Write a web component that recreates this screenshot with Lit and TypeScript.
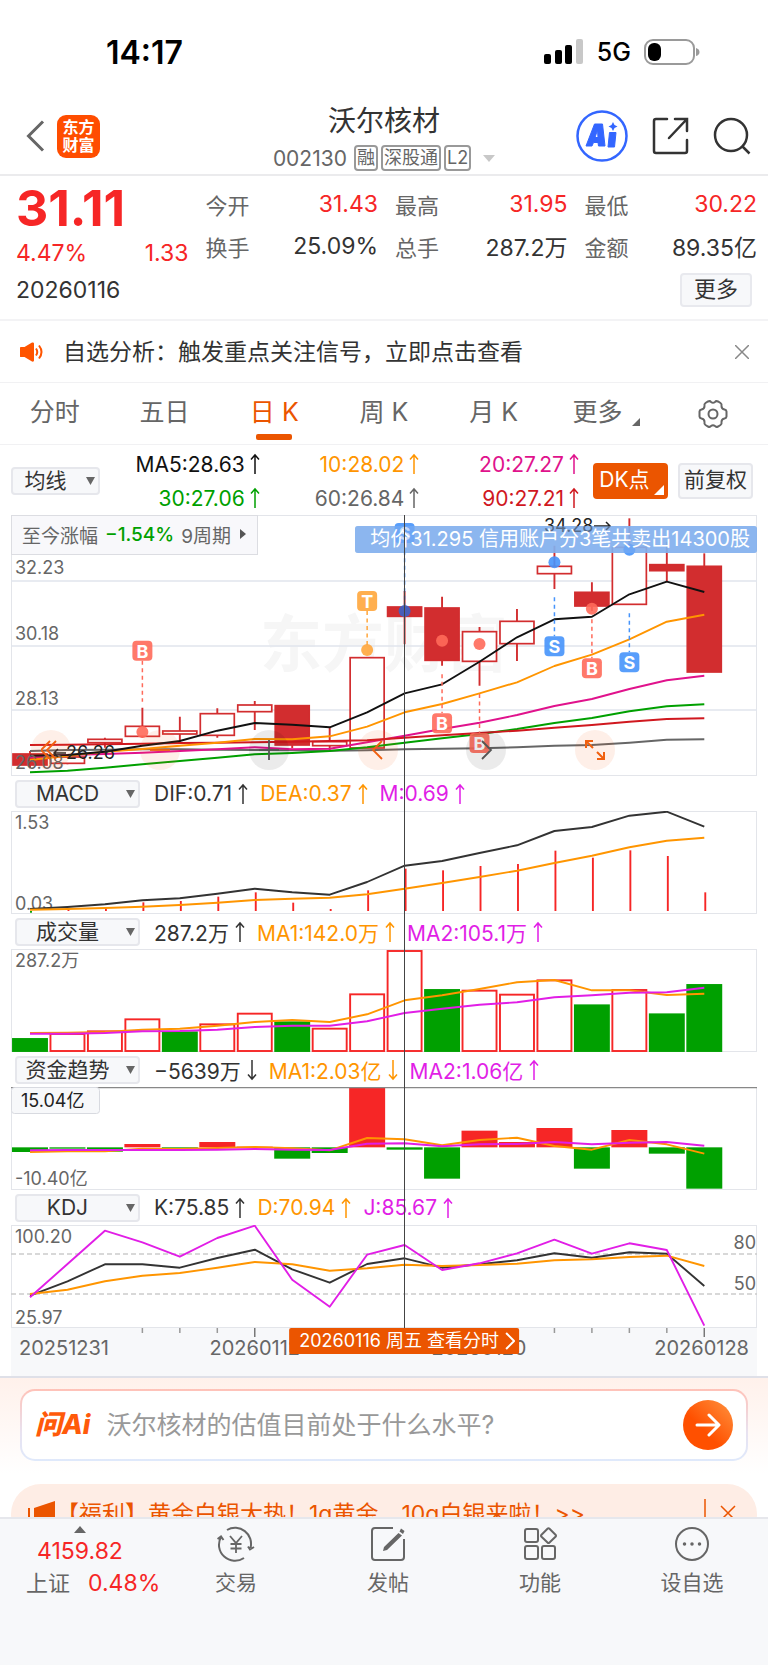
import { LitElement, html, svg, css } from "lit";
import { customElement, state } from "lit/decorators.js";
import { classMap } from "lit/directives/class-map.js";

/* Series samples are stored in thirds of a pixel; each pane subtracts its own origin. */
const PITCH = 37.46;
const cx = (i: number) => 19 + PITCH * i;
const yOf = (v: number, top: number) => (v - top) / 3;
const path = (values: number[], top: number) =>
  values.map((v, i) => `${i ? "L" : "M"}${cx(i).toFixed(1)} ${yOf(v, top).toFixed(1)}`).join("");

const RED = "#d22d2f";
const UP = "#f62626";
const GREEN = "#00a000";
const ORANGE = "#ff9500";
const VIOLET = "#e11ee6";
const INK = "#333";

const CANDLES: Array<[number, number, number, number, number]> = [
  // filled, body top, body bottom, wick top, wick bottom
  [1, 747, 780, 738, 790],
  [0, 756, 775, 750, 778],
  [0, 703, 713, 698, 728],
  [0, 664, 694, 608, 698],
  [0, 678, 687, 635, 710],
  [0, 626, 691, 610, 698],
  [0, 600, 620, 588, 675],
  [1, 602, 720, 600, 730],
  [0, 710, 722, 667, 740],
  [0, 458, 729, 458, 729],
  [1, 306, 334, 258, 418],
  [1, 309, 466, 275, 482],
  [0, 380, 469, 366, 542],
  [0, 349, 416, 312, 468],
  [0, 184, 206, 122, 252],
  [1, 262, 303, 232, 318],
  [0, 127, 298, 40, 298],
  [1, 179, 197, 110, 230],
  [1, 184, 501, 145, 501],
];

const AVERAGES: Array<[string, number[]]> = [
  ["#666", [738, 735, 734, 733, 733, 734, 735, 736, 737, 736, 733, 731, 730, 727, 722, 720, 713, 704, 703]],
  ["#00a000", [802, 797, 788, 778, 768, 758, 748, 744, 738, 727, 713, 700, 687, 672, 654, 639, 619, 604, 598]],
  ["#e0128c", [757, 750, 747, 743, 738, 733, 727, 733, 731, 712, 692, 672, 653, 630, 603, 582, 552, 526, 512]],
  ["#d0181f", [720, 719, 718, 716, 714, 713, 712, 710, 708, 706, 698, 691, 684, 677, 668, 660, 650, 642, 640]],
  [ORANGE, [765, 752, 740, 732, 722, 713, 702, 703, 694, 665, 622, 597, 565, 532, 483, 449, 403, 350, 329]],
  ["#111", [752, 750, 740, 722, 708, 677, 654, 659, 667, 622, 565, 538, 470, 397, 343, 335, 268, 230, 261]],
];

const TRADES: Array<{ at: number; kind: string; tag: number; from: number; to: number; dot: number }> = [
  { at: 3, kind: "B", tag: 437, from: 467, to: 590, dot: 681 },
  { at: 9, kind: "T", tag: 288, from: 318, to: 420, dot: 435 },
  { at: 10, kind: "S", tag: 84, from: 115, to: 300, dot: 318 },
  { at: 11, kind: "B", tag: 655, from: 508, to: 624, dot: 407 },
  { at: 12, kind: "B", tag: 714, from: 567, to: 684, dot: 417 },
  { at: 14, kind: "S", tag: 424, from: 277, to: 394, dot: 172 },
  { at: 15, kind: "B", tag: 490, from: 343, to: 460, dot: 311 },
  { at: 16, kind: "S", tag: 472, from: 325, to: 442, dot: 134 },
];
const TRADE_COLORS: Record<string, string> = { B: "#ff6a5a", S: "#4694fb", T: "#ffa63c" };

const MACD = {
  dif: [402, 396, 388, 376, 370, 356, 341, 352, 359, 321, 272, 258, 234, 211, 168, 156, 122, 110, 155],
  dea: [404, 402, 399, 395, 390, 383, 375, 371, 368, 358, 341, 324, 306, 287, 264, 242, 217, 197, 188],
  bars: [413, 402, 400, 382, 378, 365, 352, 383, 402, 346, 281, 286, 273, 267, 227, 248, 226, 243, 352],
};

const VOLUME = {
  bars: [-788, 773, 765, 729, -768, 744, 712, -738, 757, 654, 524, -641, 643, 655, 612, -687, 641, -714, -626],
  ma1: [773, 772, 770, 763, 760, 751, 740, 734, 740, 717, 675, 660, 641, 621, 614, 645, 645, 659, 655],
  ma2: [775, 775, 773, 768, 767, 763, 755, 751, 751, 738, 713, 700, 688, 681, 666, 660, 652, 651, 637],
};

const FUNDS = {
  bars: [306, 296, 305, 282, 296, 276, 290, 326, 309, 113, 299, 386, 242, 276, 234, 356, 240, 311, 416],
  ma1: [306, 304, 304, 296, 297, 294, 291, 295, 301, 264, 268, 286, 270, 263, 288, 299, 270, 283, 311],
  ma2: [301, 300, 300, 300, 300, 299, 297, 299, 300, 281, 280, 289, 283, 282, 276, 283, 278, 276, 287],
};

const KDJ = {
  k: [735, 692, 641, 641, 651, 622, 597, 656, 696, 640, 623, 651, 641, 629, 608, 621, 605, 609, 706],
  d: [730, 717, 692, 675, 667, 651, 634, 641, 660, 653, 642, 646, 643, 639, 629, 626, 619, 615, 646],
  j: [740, 640, 540, 575, 618, 562, 525, 687, 768, 612, 583, 658, 638, 608, 567, 609, 578, 598, 825],
};

const FONT = css`
  :host {
    font-family: Inter, "Noto Sans CJK SC", sans-serif;
  }
  * {
    box-sizing: border-box;
  }
  button,
  select,
  input {
    font: inherit;
    color: inherit;
    margin: 0;
    padding: 0;
    border: 0;
    background: none;
  }
  svg {
    display: block;
    flex: none;
  }
`;

const arrow = (down = false) => html`
  <svg class="arrow" width="10" height="22" viewBox="0 0 10 22" fill="none" stroke="currentColor" stroke-width="1.500">
    <path d=${down ? "M5 1V20M1 15.500L5 20L9 15.500" : "M5 21V2M1 6.500L5 2L9 6.500"} />
  </svg>
`;

@customElement("status-bar")
class StatusBar extends LitElement {
  static styles = [
    FONT,
    css`
      :host {
        display: flex;
        align-items: center;
        justify-content: space-between;
        height: 100px;
        padding: 4px 68px 0 106px;
        color: #000;
      }
      .time {
        font-size: 32px;
        font-weight: 600;
      }
      .right {
        display: flex;
        align-items: center;
        gap: 13px;
        font-size: 25px;
        font-weight: 500;
      }
    `,
  ];
  render() {
    return html`
      <span class="time">14:17</span>
      <div class="right">
        <svg width="40" height="26" viewBox="0 0 40 26">
          <rect x="0" y="15" width="7" height="10" rx="2" />
          <rect x="11" y="11" width="7" height="14" rx="2" />
          <rect x="21" y="6" width="7" height="19" rx="2" />
          <rect x="32" y="0" width="7" height="25" rx="2" fill="#c8c8c8" />
        </svg>
        <span>5G</span>
        <svg width="56" height="26" viewBox="0 0 56 26">
          <rect x="1" y="1" width="49" height="24" rx="8" fill="none" stroke="#9a9a9a" stroke-width="2" />
          <rect x="4" y="4" width="13" height="18" rx="6" />
          <path d="M52 9q3.500 1 3.500 4t-3.500 4z" fill="#9a9a9a" />
        </svg>
      </div>
    `;
  }
}

@customElement("stock-header")
class StockHeader extends LitElement {
  static styles = [
    FONT,
    css`
      :host {
        display: grid;
        grid-template-columns: 1fr auto 1fr;
        align-items: center;
        height: 76px;
        padding: 0 17px;
        border-bottom: 2px solid #ebebed;
      }
      .side {
        display: flex;
        align-items: center;
        margin-bottom: 4px;
      }
      .left {
        gap: 12px;
        padding-left: 9px;
      }
      .actions {
        justify-content: flex-end;
        gap: 24px;
      }
      .logo {
        display: grid;
        place-content: center;
        width: 43px;
        height: 43px;
        border-radius: 9px;
        background: #ff4d00;
        color: #fff;
        font-size: 16px;
        font-weight: 700;
        line-height: 18px;
        text-align: center;
      }
      .title {
        padding-top: 2px;
        text-align: center;
      }
      h1 {
        margin: 0;
        color: #333;
        font-size: 28px;
        font-weight: 400;
        line-height: 38px;
      }
      .sub {
        display: flex;
        align-items: center;
        justify-content: center;
        gap: 3px;
        height: 36px;
        color: #666;
        font-size: 21px;
      }
      .code {
        margin-right: 4px;
      }
      .tag {
        height: 26px;
        padding: 0 1px;
        border: 2px solid #999;
        border-radius: 4px;
        font-size: 18px;
        line-height: 22px;
      }
      .caret {
        margin-left: 9px;
      }
    `,
  ];
  render() {
    return html`
      <div class="side left">
        <button aria-label="返回">
          <svg width="19" height="32" viewBox="0 0 19 32" fill="none" stroke="#666" stroke-width="3">
            <path d="M17 1.500L2.500 16L17 30.500" />
          </svg>
        </button>
        <div class="logo">东方<br />财富</div>
      </div>
      <div class="title">
        <h1>沃尔核材</h1>
        <div class="sub">
          <span class="code">002130</span>
          <span class="tag">融</span><span class="tag">深股通</span><span class="tag">L2</span>
          <svg class="caret" width="12" height="7" viewBox="0 0 12 7"><path d="M0 0H12L6 7z" fill="#c8c8c8" /></svg>
        </div>
      </div>
      <div class="side actions">
        <button aria-label="Ai">
          <svg width="52" height="52" viewBox="0 0 52 52" fill="#3366ff">
            <circle cx="26" cy="26" r="24.500" fill="none" stroke="#3366ff" stroke-width="2.500" />
            <path
              d="M18.500 14H26.500L29 36H22.500L22 32.500H17.500L16 36H10zM21.500 20L19 27.500H22z"
              fill-rule="evenodd"
              stroke="#3366ff"
              stroke-width="1"
              stroke-linejoin="round"
            />
            <path d="M33.500 22.500H40L38.500 37H32z" stroke="#3366ff" stroke-linejoin="round" />
            <path d="M37 12L38.500 15L41.500 16.500L38.500 18L37 21L35.500 18L32.500 16.500L35.500 15z" />
          </svg>
        </button>
        <button aria-label="分享">
          <svg width="37" height="38" viewBox="0 0 37 38" fill="none" stroke="#333" stroke-width="2.500">
            <path d="M15 2H4Q2 2 2 4V34Q2 36 4 36H33Q35 36 35 34V23M23 2H35V14M34.500 2.500L17 21" stroke-linecap="round" />
          </svg>
        </button>
        <button aria-label="搜索">
          <svg width="38" height="38" viewBox="0 0 38 38" fill="none" stroke="#333" stroke-width="2.500">
            <circle cx="18" cy="18" r="16" />
            <path d="M29 29L36.500 36.500" />
          </svg>
        </button>
      </div>
    `;
  }
}

@customElement("quote-panel")
class QuotePanel extends LitElement {
  static styles = [
    FONT,
    css`
      :host {
        display: block;
        padding: 7px 11px 12px 16px;
        border-bottom: 2px solid #f3f3f5;
        font-size: 22px;
        color: #333;
      }
      .grid {
        display: grid;
        grid-template-columns: repeat(4, 1fr);
        column-gap: 17px;
      }
      .lead,
      .col {
        display: flex;
        flex-direction: column;
      }
      .price {
        height: 50px;
        color: #f62626;
        font-size: 50px;
        font-weight: 700;
        line-height: 50px;
      }
      .row {
        display: flex;
        align-items: center;
        justify-content: space-between;
        height: 42px;
        white-space: nowrap;
      }
      .lead .row {
        height: 40px;
      }
      .label {
        color: #666;
      }
      .value {
        font-size: 23px;
      }
      .up {
        color: #f62626;
      }
      .foot {
        display: flex;
        align-items: center;
        justify-content: space-between;
        height: 34px;
        margin-right: 5px;
      }
      .more {
        width: 72px;
        height: 34px;
        padding-bottom: 2px;
        border: 2px solid #e8e9ee;
        border-radius: 4px;
        background: #f7f8fa;
        line-height: 28px;
      }
    `,
  ];
  private cols = [
    [["今开", "31.43", true], ["换手", "25.09%", false]],
    [["最高", "31.95", true], ["总手", "287.2万", false]],
    [["最低", "30.22", true], ["金额", "89.35亿", false]],
  ] as Array<Array<[string, string, boolean]>>;
  render() {
    return html`
      <div class="grid">
        <div class="lead">
          <div class="price">31.11</div>
          <div class="row value up"><span>4.47%</span><span>1.33</span></div>
        </div>
        ${this.cols.map(
          (col) => html`<div class="col">
            ${col.map(
              ([label, value, up]) => html`<div class="row">
                <span class="label">${label}</span><span class=${classMap({ value: true, up })}>${value}</span>
              </div>`
            )}
          </div>`
        )}
      </div>
      <div class="foot"><span class="value">20260116</span><button class="more">更多</button></div>
    `;
  }
}

@customElement("signal-notice")
class SignalNotice extends LitElement {
  static styles = [
    FONT,
    css`
      :host {
        display: flex;
        align-items: center;
        height: 62px;
        padding: 0 19px 0 20px;
        border-bottom: 1px solid #f1f1f3;
      }
      .text {
        flex: 1;
        margin-left: 19px;
        padding-bottom: 4px;
        color: #333;
        font-size: 23px;
      }
    `,
  ];
  render() {
    return html`
      <svg width="24" height="20" viewBox="0 0 24 20" fill="#ff5500">
        <path d="M0 5.500Q0 5 1 5H4.500L12 0.500Q14 0 14 1.500V18.500Q14 20 12 19.500L4.500 15H1Q0 15 0 14.500z" />
        <path d="M16 6.500Q18.500 10 16 13.500M19 3.500Q24 10 19 16.500" fill="none" stroke="#ff5500" stroke-width="2" />
      </svg>
      <span class="text">自选分析：触发重点关注信号，立即点击查看</span>
      <button aria-label="关闭">
        <svg width="14" height="14" viewBox="0 0 14 14" stroke="#888" stroke-width="1.500"><path d="M0 0L14 14M14 0L0 14" /></svg>
      </button>
    `;
  }
}

@customElement("period-tabs")
class PeriodTabs extends LitElement {
  static styles = [
    FONT,
    css`
      :host {
        display: grid;
        grid-template-columns: repeat(7, 1fr);
        height: 62px;
        border-bottom: 1px solid #f1f1f3;
        color: #666;
        font-size: 25px;
      }
      .tab {
        display: flex;
        flex-direction: column;
        align-items: center;
        justify-content: space-between;
        padding: 10px 0 4px;
        line-height: 38px;
        white-space: nowrap;
      }
      .tab::after {
        content: "";
        width: 36px;
        height: 6px;
        border-radius: 2px;
      }
      .on {
        color: #eb5500;
      }
      .on::after {
        background: #eb5500;
      }
      .wide {
        position: relative;
        padding-right: 12px;
      }
      .wide svg {
        position: absolute;
        right: 18px;
        bottom: 18px;
      }
      .gear {
        display: grid;
        place-items: center;
      }
    `,
  ];
  @state() private active = 2;
  render() {
    const tabs = ["分时", "五日", "日 K", "周 K", "月 K", "更多"];
    return html`
      ${tabs.map(
        (t, i) => html`<button
          class=${classMap({ tab: true, on: i === this.active, wide: i === 5 })}
          @click=${() => (this.active = i)}
        >
          <span>${t}</span>
          ${i === 5 ? html`<svg width="8" height="8" viewBox="0 0 8 8"><path d="M8 0V8H0z" fill="#666" /></svg>` : ""}
        </button>`
      )}
      <button class="gear" aria-label="设置">
        <svg width="30" height="30" viewBox="0 0 30 30" fill="none" stroke="#666" stroke-width="2">
          <path
            d="M10 2.500Q12 1.500 13 3Q15 4.500 17 3Q18 1.500 20 2.500L22.500 4Q24 5 23.500 7Q23.500 10 26.500 10.500Q28.500 11 28.500 12.500V17.500Q28.500 19 26.500 19.500Q23.500 20 23.500 23Q24 25 22.500 26L20 27.500Q18 28.500 17 27Q15 25.500 13 27Q12 28.500 10 27.500L7.500 26Q6 25 6.500 23Q6.500 20 3.500 19.500Q1.500 19 1.500 17.500V12.500Q1.500 11 3.500 10.500Q6.500 10 6.500 7Q6 5 7.500 4z"
          />
          <circle cx="15" cy="15" r="4.500" />
        </svg>
      </button>
    `;
  }
}

@customElement("indicator-select")
class IndicatorSelect extends LitElement {
  static properties = { value: {}, label: {} };
  declare value: string;
  declare label: string;
  static styles = [
    FONT,
    css`
      :host {
        display: block;
        position: relative;
        height: 28px;
      }
      select {
        appearance: none;
        display: block;
        width: 100%;
        height: 28px;
        padding: 0 20px 0 0;
        border: 2px solid #e6e7ec;
        border-radius: 4px;
        background: #f7f8fa;
        color: #333;
        font-size: 21px;
        line-height: 24px;
        text-align: center;
        text-align-last: center;
      }
      svg {
        position: absolute;
        right: 5px;
        top: 10px;
        pointer-events: none;
      }
    `,
  ];
  render() {
    return html`
      <select aria-label=${this.label}>
        <option selected>${this.value}</option>
      </select>
      <svg width="9" height="8" viewBox="0 0 9 8"><path d="M0 0H9L4.500 8z" fill="#666" /></svg>
    `;
  }
}

@customElement("average-bar")
class AverageBar extends LitElement {
  static styles = [
    FONT,
    css`
      :host {
        display: flex;
        align-items: center;
        height: 70px;
        padding: 2px 15px 0 11px;
        font-size: 21px;
      }
      indicator-select {
        width: 89px;
      }
      .values {
        flex: 1;
        display: grid;
        grid-template-columns: repeat(3, 1fr);
        margin-right: 14px;
      }
      .item {
        display: flex;
        align-items: center;
        justify-content: flex-end;
        gap: 5px;
        height: 34px;
        white-space: nowrap;
      }
      .ma5 { color: #111; }
      .ma10 { color: #ff9500; }
      .ma20 { color: #e0128c; }
      .ma30 { color: #00a000; }
      .ma60 { color: #666; }
      .ma90 { color: #d0181f; }
      .btn {
        position: relative;
        width: 75px;
        height: 36px;
        padding-bottom: 2px;
        border: 2px solid #e6e7ec;
        border-radius: 4px;
        background: #f7f8fa;
        color: #333;
        line-height: 30px;
        white-space: nowrap;
      }
      .dk {
        margin-right: 10px;
        padding-right: 12px;
        border-color: #eb5500;
        background: #eb5500;
        color: #fff;
      }
      .dk svg {
        position: absolute;
        right: 2px;
        bottom: 2px;
      }
    `,
  ];
  render() {
    const items = [
      ["ma5", "MA5:28.63"],
      ["ma10", "10:28.02"],
      ["ma20", "20:27.27"],
      ["ma30", "30:27.06"],
      ["ma60", "60:26.84"],
      ["ma90", "90:27.21"],
    ];
    return html`
      <indicator-select value="均线" label="主图指标"></indicator-select>
      <div class="values">
        ${items.map(([c, t]) => html`<span class="item ${c}">${t}${arrow()}</span>`)}
      </div>
      <button class="btn dk">
        DK点<svg width="10" height="10" viewBox="0 0 10 10"><path d="M10 0V10H0z" fill="#fff" /></svg>
      </button>
      <button class="btn">前复权</button>
    `;
  }
}

@customElement("stock-charts")
class StockCharts extends LitElement {
  static styles = [
    FONT,
    css`
      :host {
        display: block;
        margin: 0 11px;
      }
      .panes {
        position: relative;
      }
      .main {
        position: relative;
      }
      .chart {
        width: 100%;
        height: auto;
      }
      .chart text {
        font-family: Inter, "Noto Sans CJK SC", sans-serif;
        font-size: 18px;
        fill: #666;
      }
      .chart .mark {
        fill: #f6f6f6;
        font-size: 62px;
        font-weight: 700;
      }
      .chart .dark {
        fill: #222;
      }
      .chart .tag {
        fill: #fff;
        font-size: 18px;
        font-weight: 700;
        text-anchor: middle;
      }
      .chart .tip {
        fill: #fff;
        font-size: 20px;
        text-anchor: end;
      }
      .end {
        text-anchor: end;
      }
      .mid {
        text-anchor: middle;
      }
      .since {
        position: absolute;
        left: 0;
        top: 0;
        display: flex;
        align-items: center;
        gap: 7px;
        height: 40px;
        padding: 0 11px 2px 10px;
        border: 1px solid #dcdde2;
        background: #f8f8fbf2;
        color: #666;
        font-size: 19px;
        white-space: nowrap;
      }
      .since svg {
        margin-left: 2px;
      }
      .since b {
        color: #00a000;
        font-weight: 500;
      }
      .tools {
        position: absolute;
        left: 2.7%;
        bottom: 6px;
        display: flex;
        justify-content: space-between;
        width: 78.3%;
      }
      .tool {
        display: grid;
        place-items: center;
        width: 40px;
        height: 40px;
        border-radius: 50%;
        background: #f5641e1a;
        color: #f06010;
      }
      .gray {
        background: #00000014;
        color: #555;
      }
      .head {
        display: flex;
        align-items: center;
        gap: 12px;
        height: 35px;
        padding-left: 4px;
        font-size: 21px;
        white-space: nowrap;
      }
      .head indicator-select {
        width: 125px;
        margin-right: 2px;
      }
      .item {
        display: flex;
        align-items: center;
        gap: 6px;
      }
      .k { color: #333; }
      .o { color: #ff9500; }
      .v { color: #e11ee6; }
      .cross {
        position: absolute;
        left: 53%;
        top: 0;
        bottom: 0;
        width: 1px;
        margin-left: -2px;
        background: #444;
      }
      .foot {
        position: relative;
        height: 48px;
        background: #f7f8fa;
      }
      .foot .chart text {
        font-size: 20px;
      }
      .day {
        position: absolute;
        left: 52.7%;
        top: 0;
        display: flex;
        align-items: center;
        gap: 6px;
        height: 26px;
        padding: 0 4px 0 10px;
        border-radius: 2px;
        background: #eb5500;
        color: #fff;
        font-size: 18px;
        line-height: 24px;
        white-space: nowrap;
        transform: translateX(-50%);
      }
    `,
  ];

  private frame(h: number) {
    return svg`<rect x="0.500" y="0.500" width="745" height=${h - 1} fill="none" stroke="#e3e5ea"/>`;
  }
  private line(values: number[], top: number, color: string) {
    return svg`<path d=${path(values, top)} fill="none" stroke=${color} stroke-width="1.900" stroke-linejoin="round"/>`;
  }

  private renderMain() {
    const T = 30;
    const y = (v: number) => yOf(v, T);
    return html`<svg class="chart" viewBox="0 0 746 261" role="img" aria-label="日K线">
      <text class="mark" x="249" y="152">东方财富</text>
      ${this.frame(261)}
      ${[66, 131, 195].map((g) => svg`<path d="M0 ${g}H746" stroke="#e1e5ec" stroke-width="1.500"/>`)}
      ${CANDLES.map(([f, a, b, hi, lo], i) =>
        svg`<path d="M${cx(i)} ${y(hi)}V${y(a)}M${cx(i)} ${y(b)}V${y(lo)}" stroke=${RED} stroke-width="1.900"/>
        <rect x=${cx(i) - 17} y=${y(a)} width="34" height=${y(b) - y(a)} fill=${f ? RED : "#fff"} stroke=${RED} stroke-width="1.700"/>`
      )}
      ${AVERAGES.map(([c, v]) => this.line(v, T, c))}
      <text x="4" y="59">32.23</text>
      <text x="4" y="125">30.18</text>
      <text x="4" y="190">28.13</text>
      <text x="4" y="254">26.08</text>
      <text class="dark" x="55" y="244">26.26</text>
      <path d="M43 238H55M47 234L43 238L47 242" fill="none" stroke="#222" stroke-width="1.500" />
      <rect x="344" y="11" width="402" height="27" rx="3" fill="#78aaeb" opacity="0.85" />
      <text class="dark" x="533" y="17">34.28</text>
      <path d="M583 11H599M595 7L599 11L595 15" fill="none" stroke="#222" stroke-width="1.500" />
      ${TRADES.map((t) => {
        const c = TRADE_COLORS[t.kind];
        const x = cx(t.at);
        return svg`
          <path d="M${x} ${y(t.from)}V${y(t.to)}" stroke=${c} stroke-width="1.500" stroke-dasharray="4 3.500"/>
          <circle cx=${x} cy=${y(t.dot)} r="6" fill=${t.kind === "S" && t.at === 10 ? "#3a63c8" : c} opacity="0.9"/>
          <rect x=${x - 10} y=${y(t.tag) - 10} width="20" height="20" rx="4" fill=${c} opacity="0.9"/>
          <text class="tag" x=${x} y=${y(t.tag) + 7}>${t.kind}</text>`;
      })}
      <rect x="344" y="11" width="402" height="27" rx="3" fill="#8cb6f0" opacity="0.5" />
      <text class="tip" x="739" y="31">均价31.295 信用账户分3笔共卖出14300股</text>
    </svg>`;
  }

  private renderMacd() {
    const T = 108;
    return html`<svg class="chart" viewBox="0 0 746 103" role="img" aria-label="MACD">
      ${this.frame(103)}
      <text x="4" y="18">1.53</text>
      <text x="4" y="99">0.03</text>
      ${MACD.bars.map(
        (v, i) => svg`<path d="M${cx(i) + 1} ${yOf(408, T)}V${yOf(v, T)}" stroke=${v > 408 ? GREEN : UP} stroke-width="1.900"/>`
      )}
      ${this.line(MACD.dif, T, INK)}${this.line(MACD.dea, T, ORANGE)}
    </svg>`;
  }

  private renderVolume() {
    const T = 521;
    return html`<svg class="chart" viewBox="0 0 746 103" role="img" aria-label="成交量">
      ${this.frame(103)}
      <text x="4" y="18">287.2万</text>
      ${VOLUME.bars.map((v, i) => {
        const top = yOf(Math.abs(v), T);
        return svg`<rect x=${cx(i) - 17} y=${top + 1} width="34" height=${101 - top}
          fill=${v < 0 ? GREEN : "#fff"} stroke=${v < 0 ? GREEN : UP} stroke-width="1.900"/>`;
      })}
      ${this.line(VOLUME.ma1, T, ORANGE)}${this.line(VOLUME.ma2, T, VIOLET)}
    </svg>`;
  }

  private renderFunds() {
    const T = 111;
    const base = 292;
    return html`<svg class="chart" viewBox="0 0 746 103" role="img" aria-label="资金趋势">
      ${this.frame(103)}
      ${FUNDS.bars.map(
        (v, i) => svg`<rect x=${cx(i) - 18} y=${yOf(Math.min(v, base), T)} width="36" height=${Math.abs(v - base) / 3}
          fill=${v > base ? GREEN : UP}/>`
      )}
      ${this.line(FUNDS.ma1, T, ORANGE)}${this.line(FUNDS.ma2, T, VIOLET)}
      <path d="M0 0.500H746" stroke="#888" stroke-width="1.500" />
      <rect x="0.500" y="0.500" width="88" height="26" rx="3" fill="#f7f8fa" stroke="#d8dae0" />
      <text class="dark" x="10" y="20">15.04亿</text>
      <text x="4" y="98">-10.40亿</text>
    </svg>`;
  }

  private renderKdj() {
    const T = 523;
    return html`<svg class="chart" viewBox="0 0 746 103" role="img" aria-label="KDJ">
      ${this.frame(103)}
      <path d="M0 29H746M0 69H746" stroke="#ccc" stroke-width="1.500" stroke-dasharray="5 3" />
      <text x="4" y="18">100.20</text>
      <text x="4" y="99">25.97</text>
      <text class="end" x="745" y="24">80</text>
      <text class="end" x="745" y="65">50</text>
      ${this.line(KDJ.k, T, INK)}${this.line(KDJ.d, T, ORANGE)}${this.line(KDJ.j, T, VIOLET)}
    </svg>`;
  }

  private head(name: string, items: Array<[string, string, boolean?]>) {
    return html`<div class="head">
      <indicator-select value=${name} label="副图指标"></indicator-select>
      ${items.map(([c, t, down]) => html`<span class="item ${c}">${t}${arrow(down)}</span>`)}
    </div>`;
  }

  render() {
    return html`
      <div class="panes">
        <div class="main">
          ${this.renderMain()}
          <button class="since">
            至今涨幅 <b>−1.54%</b> 9周期
            <svg width="6" height="10" viewBox="0 0 6 10"><path d="M0 0L6 5L0 10z" fill="#555" /></svg>
          </button>
          <div class="tools">
            <button class="tool" aria-label="最左">
              <svg width="20" height="20" viewBox="0 0 20 20" fill="none" stroke="currentColor" stroke-width="1.800">
                <path d="M9 1L0 10L9 19M15 1L6 10L15 19" />
              </svg>
            </button>
            <button class="tool" aria-label="缩小">
              <svg width="20" height="20" viewBox="0 0 20 20" stroke="currentColor" stroke-width="1.800"><path d="M0 10H20" /></svg>
            </button>
            <button class="tool gray" aria-label="放大">
              <svg width="20" height="20" viewBox="0 0 20 20" stroke="currentColor" stroke-width="1.800"><path d="M0 10H20M10 0V20" /></svg>
            </button>
            <button class="tool" aria-label="左移">
              <svg width="20" height="20" viewBox="0 0 20 20" fill="none" stroke="currentColor" stroke-width="1.800">
                <path d="M14 1L5 10L14 19" />
              </svg>
            </button>
            <button class="tool gray" aria-label="右移">
              <svg width="20" height="20" viewBox="0 0 20 20" fill="none" stroke="currentColor" stroke-width="1.800">
                <path d="M6 1L15 10L6 19" />
              </svg>
            </button>
            <button class="tool" aria-label="全屏">
              <svg width="20" height="20" viewBox="0 0 20 20" fill="none" stroke="currentColor" stroke-width="2">
                <path d="M8 1H1V8M1 1L8 8M12 19H19V12M19 19L12 12" />
              </svg>
            </button>
          </div>
        </div>
        ${this.head("MACD", [["k", "DIF:0.71"], ["o", "DEA:0.37"], ["v", "M:0.69"]])} ${this.renderMacd()}
        ${this.head("成交量", [["k", "287.2万"], ["o", "MA1:142.0万"], ["v", "MA2:105.1万"]])} ${this.renderVolume()}
        ${this.head("资金趋势", [["k", "−5639万", true], ["o", "MA1:2.03亿", true], ["v", "MA2:1.06亿"]])}
        ${this.renderFunds()}
        ${this.head("KDJ", [["k", "K:75.85"], ["o", "D:70.94"], ["v", "J:85.67"]])} ${this.renderKdj()}
        <div class="cross"></div>
      </div>
      <div class="foot">
        <svg class="chart" viewBox="0 0 746 48">
          ${[3, 4, 5, 14, 15, 16, 17].map((i) => svg`<path d="M${cx(i)} 0V5" stroke="#999" stroke-width="1.500"/>`)}
          ${[6, 18].map((i) => svg`<path d="M${cx(i)} 0V9" stroke="#777" stroke-width="1.500"/>`)}
          <text x="8" y="27">20251231</text>
          <text class="mid" x=${cx(6)} y="27">20260112</text>
          <text class="mid" x="468" y="27">20260120</text>
          <text class="end" x="738" y="27">20260128</text>
        </svg>
        <button class="day">
          20260116 周五 查看分时
          <svg width="10" height="18" viewBox="0 0 10 18" fill="none" stroke="#fff" stroke-width="2"><path d="M1 1L9 9L1 17" /></svg>
        </button>
      </div>
    `;
  }
}

@customElement("ask-ai")
class AskAi extends LitElement {
  static styles = [
    FONT,
    css`
      :host {
        display: block;
        padding: 11px 20px 23px;
        border-top: 2px solid #dfe0e8;
        background: linear-gradient(#fff1eb, #ffffff 90%);
      }
      .box {
        display: flex;
        align-items: center;
        gap: 16px;
        height: 72px;
        padding: 0 13px;
        border: 2px solid transparent;
        border-radius: 15px;
        background: linear-gradient(#fff, #fff) padding-box, linear-gradient(#ffc2b8, #e8e2f0 60%, #dfe9fb) border-box;
      }
      .brand {
        color: #ff5a0a;
        font-size: 27px;
        font-style: italic;
        font-weight: 800;
        line-height: 32px;
      }
      input {
        flex: 1;
        min-width: 0;
        height: 40px;
        outline: 0;
        font-size: 25px;
      }
      input::placeholder {
        color: #999;
        opacity: 1;
      }
      .go {
        display: grid;
        place-items: center;
        width: 50px;
        height: 50px;
        border-radius: 50%;
        background: linear-gradient(45deg, #ff5000 40%, #ff9440);
      }
    `,
  ];
  render() {
    return html`
      <div class="box">
        <span class="brand">问Ai</span>
        <input aria-label="问Ai" placeholder="沃尔核材的估值目前处于什么水平?" />
        <button class="go" aria-label="发送">
          <svg width="26" height="24" viewBox="0 0 26 24" fill="none" stroke="#fff" stroke-width="3" stroke-linecap="round" stroke-linejoin="round">
            <path d="M2 12H23M14 2L24 12L14 22" />
          </svg>
        </button>
      </div>
    `;
  }
}

@customElement("promo-banner")
class PromoBanner extends LitElement {
  static styles = [
    FONT,
    css`
      :host {
        display: flex;
        align-items: center;
        height: 60px;
        margin: 0 11px;
        padding: 0 21px 2px 17px;
        border-radius: 30px;
        background: #feede5;
        color: #eb5500;
        font-size: 23px;
        white-space: nowrap;
      }
      a {
        flex: 1;
        padding-bottom: 2px;
        color: inherit;
        text-decoration: none;
      }
      .close {
        display: flex;
        align-items: center;
      }
    `,
  ];
  render() {
    return html`
      <svg width="28" height="25" viewBox="0 0 28 25" fill="#eb5500"><path d="M0 7H2V19H0zM6 7L27 0V24L6 19z" /></svg>
      <a href="#">【福利】黄金白银大热！1g黄金、10g白银来啦！&gt;&gt;</a>
      <button class="close" aria-label="关闭">
        <svg width="32" height="28" viewBox="0 0 32 28" fill="none" stroke="#eb5500" stroke-width="1.500">
          <path d="M1 0V28M17 7L31 21M31 7L17 21" />
        </svg>
      </button>
    `;
  }
}

@customElement("bottom-nav")
class BottomNav extends LitElement {
  static styles = [
    FONT,
    css`
      :host {
        display: grid;
        grid-template-columns: 160px repeat(4, 1fr);
        align-items: start;
        height: 148px;
        padding-top: 7px;
        border-top: 2px solid #e6e7ec;
        background: #f7f8fa;
        color: #666;
      }
      .index {
        display: flex;
        flex-direction: column;
        align-items: center;
        font-size: 22px;
        line-height: 32px;
        white-space: nowrap;
      }
      .index svg {
        margin-bottom: 2px;
      }
      .pair {
        display: flex;
        gap: 18px;
        padding-left: 26px;
        align-self: flex-start;
      }
      .up {
        color: #f62626;
        font-size: 23px;
      }
      .item {
        display: flex;
        flex-direction: column;
        align-items: center;
        gap: 5px;
        font-size: 21px;
        line-height: 32px;
      }
    `,
  ];
  render() {
    const items = [
      [
        "交易",
        svg`<path d="M10 4A16 16 0 0 1 33.500 22M27 32A16 16 0 0 1 4 11M0.500 13L4 10.500L6.500 14M31 20.500L33 23.500L37 21"/><path d="M13 10L19 17L25 10M19 17V27M13.500 18H24.500M13.500 22.500H24.500" stroke-width="1.800"/>`,
      ],
      [
        "发帖",
        svg`<path d="M24 2H6Q3 2 3 5V31Q3 34 6 34H32Q35 34 35 31V13"/><path d="M32 2.500L35.500 5L34 8L30.500 5.500zM29.500 7L33 9.500L18 24L14 25L15 21z" fill="#666" stroke="none"/>`,
      ],
      [
        "功能",
        svg`<rect x="4" y="3" width="13" height="13" rx="2"/><rect x="4" y="20" width="13" height="13" rx="2"/><rect x="21" y="20" width="13" height="13" rx="2"/><path d="M26.500 2.800Q27.500 1.800 28.500 2.800L34.500 8.700Q35.500 9.700 34.500 10.700L28.500 16.500Q27.500 17.500 26.500 16.500L20.500 10.700Q19.500 9.700 20.500 8.700z"/>`,
      ],
      [
        "设自选",
        svg`<circle cx="19" cy="18" r="16"/><path d="M11.500 18h.010M19 18h.010M26.500 18h.010" stroke-width="3.500" stroke-linecap="round"/>`,
      ],
    ] as const;
    return html`
      <button class="index">
        <svg width="12" height="7" viewBox="0 0 12 7"><path d="M6 0L12 7H0z" fill="#666" /></svg>
        <span class="up">4159.82</span>
        <span class="pair"><span>上证</span><span class="up">0.48%</span></span>
      </button>
      ${items.map(
        ([t, icon]) => html`<button class="item">
          <svg width="38" height="36" viewBox="0 0 38 36" fill="none" stroke="#666" stroke-width="2">${icon}</svg>
          <span>${t}</span>
        </button>`
      )}
    `;
  }
}

@customElement("app-root")
class AppRoot extends LitElement {
  static styles = [
    FONT,
    css`
      :host {
        display: flex;
        flex-direction: column;
        height: 100vh;
        background: #fff;
      }
      main {
        flex: 1;
        min-height: 0;
        overflow: hidden;
      }
    `,
  ];
  render() {
    return html`
      <main>
        <status-bar></status-bar>
        <stock-header></stock-header>
        <quote-panel></quote-panel>
        <signal-notice></signal-notice>
        <period-tabs></period-tabs>
        <average-bar></average-bar>
        <stock-charts></stock-charts>
        <ask-ai></ask-ai>
        <promo-banner></promo-banner>
      </main>
      <bottom-nav></bottom-nav>
    `;
  }
}
